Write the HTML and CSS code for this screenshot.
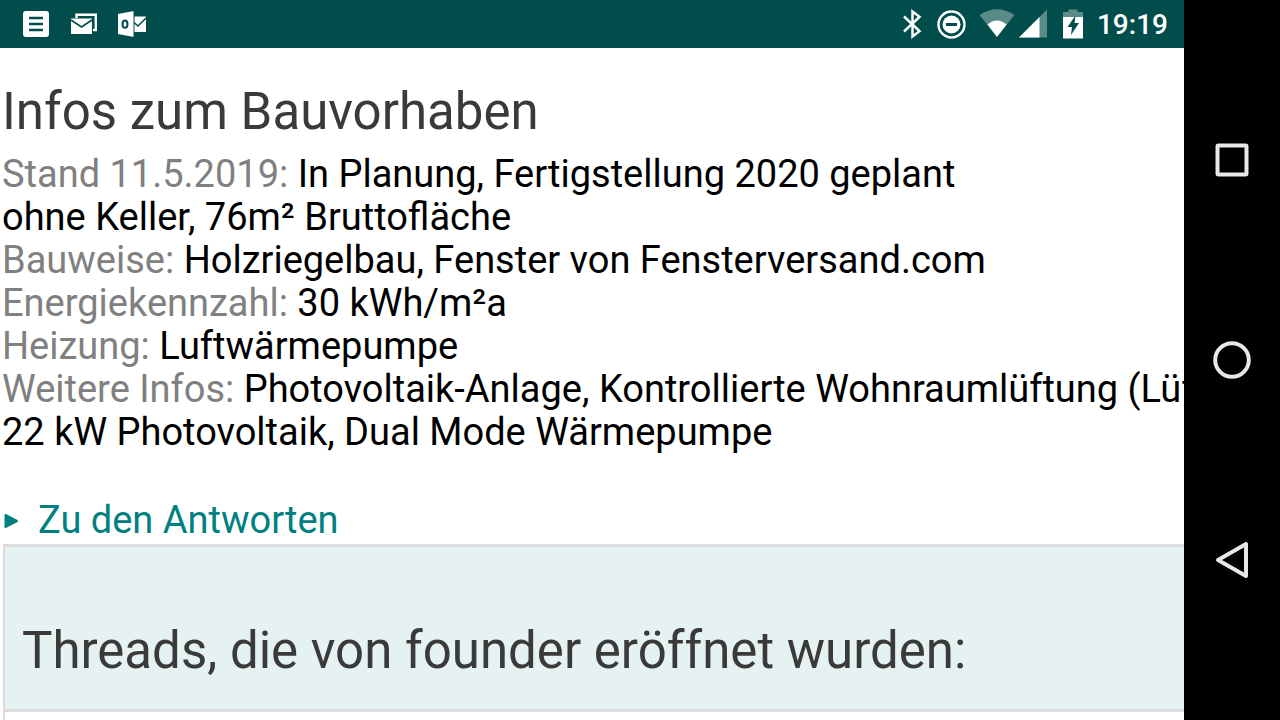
FILE: index.html
```html
<!DOCTYPE html>
<html lang="de">
<head>
    <meta charset="UTF-8">
    <meta name="viewport" content="width=device-width, initial-scale=1.0">
    <title>Infos zum Bauvorhaben</title>
    <link rel="stylesheet" href="styles.css">
</head>
<body>
    <div class="screen">
        <!-- Statusleiste -->
        <header class="status-bar">
            <div class="notifications">
                <svg class="icon" viewBox="0 0 32 32" aria-hidden="true">
                    <rect x="3" y="3" width="26" height="26" rx="3" fill="#fff"/>
                    <path d="M9 10h14M9 16h14M9 22h14" stroke="#004d4b" stroke-width="2.4"/>
                </svg>
                <svg class="icon" viewBox="0 0 32 32" aria-hidden="true">
                    <path d="M8.500 10V6.800H27.800V22H25" fill="none" stroke="#fff" stroke-width="2.400"/>
                    <path d="M3 10.500H24V26H3z" fill="#fff"/>
                    <path d="M3 12l10.500 7L24 12" fill="none" stroke="#004d4b" stroke-width="1.600"/>
                </svg>
                <svg class="icon" viewBox="0 0 32 32" aria-hidden="true">
                    <path d="M18 8.500h12V24H18z" fill="#fff"/>
                    <path d="M18 14.500l4 3.500 8-8" fill="none" stroke="#004d4b" stroke-width="1.500"/>
                    <path d="M2 6l16-3v26L2 26z" fill="#fff"/>
                    <path d="M18 3v26" stroke="#004d4b"/>
                    <ellipse cx="9" cy="16.200" rx="2.500" ry="3.600" fill="none" stroke="#004d4b" stroke-width="2"/>
                </svg>
            </div>
            <div class="system">
                <svg class="icon" viewBox="0 0 32 32" aria-hidden="true">
                    <path d="M9 8.500l15.500 14.700-7 5.300V3.500l7 5.300L9 23.500" fill="none" stroke="#fff" stroke-width="2.500"/>
                </svg>
                <svg class="icon" viewBox="0 0 32 32" aria-hidden="true">
                    <circle cx="16.500" cy="16.500" r="13" fill="none" stroke="#fff" stroke-width="2.400"/>
                    <circle cx="16.500" cy="16.500" r="9" fill="#fff"/>
                    <path d="M11 16.500h11" stroke="#004d4b" stroke-width="3"/>
                </svg>
                <svg class="icon icon-wide" viewBox="0 0 36 32" aria-hidden="true">
                    <path d="M18 29L.500 7Q18-4.500 35.500 7z" fill="#fff" opacity=".35"/>
                    <path d="M18 29L8.500 16.500Q18 8.500 27.500 16.500z" fill="#fff"/>
                </svg>
                <svg class="icon" viewBox="0 0 32 32" aria-hidden="true">
                    <path d="M2 29.500L30 1.500v28z" fill="#fff" opacity=".35"/>
                    <path d="M2 29.500L22.500 9v20.500z" fill="#fff"/>
                </svg>
                <svg class="icon" viewBox="0 0 32 32" aria-hidden="true">
                    <path d="M6 9V4h5.500V1.500h9V4H26v5z" fill="#fff" opacity=".35"/>
                    <path d="M6 9h20v21.500H6z" fill="#fff"/>
                    <path d="M18.500 7.500L10.500 19h4.500l-1 8L22 15h-4.500z" fill="#004d4b"/>
                </svg>
                <time class="clock">19:19</time>
            </div>
        </header>

        <!-- Seiteninhalt -->
        <main class="page">
            <section class="project">
                <h1 class="heading">Infos zum Bauvorhaben</h1>
                <p class="details">
                    <span class="label">Stand 11.5.2019:</span> In Planung, Fertigstellung 2020 geplant<br>
                    ohne Keller, 76m² Bruttofläche<br>
                    <span class="label">Bauweise:</span> Holzriegelbau, Fenster von Fensterversand.com<br>
                    <span class="label">Energiekennzahl:</span> 30 kWh/m²a<br>
                    <span class="label">Heizung:</span> Luftwärmepumpe<br>
                    <span class="label">Weitere Infos:</span> Photovoltaik-Anlage, Kontrollierte Wohnraumlüftung (Lüf<br>
                    22 kW Photovoltaik, Dual Mode Wärmepumpe
                </p>
                <a class="answers" href="#threads">
                    <svg class="arrow" viewBox="0 0 16 18" aria-hidden="true">
                        <path d="M3.500 3v12L15 9z" fill="#008080" stroke="#008080" stroke-width="2" stroke-linejoin="round"/>
                    </svg>
                    Zu den Antworten
                </a>
            </section>

            <section class="threads" id="threads">
                <h2 class="heading threads-title">Threads, die von founder eröffnet wurden:</h2>
                <div class="threads-body"></div>
            </section>
        </main>
    </div>

    <!-- Navigationstasten -->
    <nav class="nav-bar">
        <button class="nav-button" type="button" aria-label="Übersicht">
            <svg viewBox="0 0 48 48"><rect x="9.500" y="9.500" width="29" height="29" rx="1"/></svg>
        </button>
        <button class="nav-button" type="button" aria-label="Startseite">
            <svg viewBox="0 0 48 48"><circle cx="24" cy="24" r="16.800"/></svg>
        </button>
        <button class="nav-button" type="button" aria-label="Zurück">
            <svg viewBox="0 0 48 48"><path d="M38 8v32L10 24z"/></svg>
        </button>
    </nav>
</body>
</html>
```

FILE: styles.css
```css
* {
    margin: 0;
    padding: 0;
    box-sizing: border-box;
}

body {
    display: flex;
    height: 100vh;
    overflow: hidden;
    font-family: Roboto, 'Liberation Sans', sans-serif;
    font-size: 38px;
    line-height: 43px;
    color: #000;
    background: #fff;
}

.screen {
    flex: 1;
    min-width: 0;
    display: flex;
    flex-direction: column;
}

/* Statusleiste */
.status-bar {
    flex: none;
    display: flex;
    align-items: center;
    justify-content: space-between;
    height: 48px;
    padding: 0 16px 0 20px;
    background: #004d4b;
}

.notifications,
.system {
    display: flex;
    align-items: center;
}

.notifications {
    gap: 16px;
}

.system {
    gap: 8px;
}

.icon {
    display: block;
    width: 32px;
    height: 32px;
}

.icon-wide {
    width: 36px;
    margin-left: 4px;
}

.icon-wide + .icon {
    margin-left: -6px;
}

.clock {
    padding-top: 2px;
    font-size: 28px;
    font-weight: 500;
    line-height: 32px;
    color: #fff;
}

/* Seiteninhalt */
.page {
    flex: 1;
    min-height: 0;
    display: flex;
    flex-direction: column;
    overflow: hidden;
    padding-top: 34px;
    white-space: nowrap;
}

.project {
    padding-left: 2px;
}

.heading {
    font-size: 51px;
    font-weight: 400;
    line-height: 60px;
    color: #3a3a3a;
}

.details {
    margin-top: 11px;
}

.label {
    color: #808080;
}

.answers {
    display: flex;
    align-items: center;
    gap: 20px;
    margin-top: 45px;
    color: #008080;
    text-decoration: none;
}

.arrow {
    width: 16px;
    height: 18px;
}

.threads {
    flex: 1;
    display: flex;
    flex-direction: column;
    margin: 2px 0 0 3px;
    border-top: 3px solid #dcdcdc;
    border-left: 2px solid #dcdcdc;
}

.threads-title {
    padding: 74px 17px 28px;
    background: #e5f2f1;
    border-bottom: 3px solid #dcdcdc;
}

.threads-body {
    flex: 1;
}

/* Navigationstasten */
.nav-bar {
    flex: none;
    display: flex;
    flex-direction: column;
    justify-content: center;
    width: 96px;
    background: #000;
}

.nav-button {
    display: flex;
    align-items: center;
    justify-content: center;
    height: 200px;
    border: none;
    background: none;
    cursor: pointer;
}

.nav-button svg {
    width: 48px;
    height: 48px;
    fill: none;
    stroke: #e8e8e8;
    stroke-width: 4;
    stroke-linejoin: round;
}
```
